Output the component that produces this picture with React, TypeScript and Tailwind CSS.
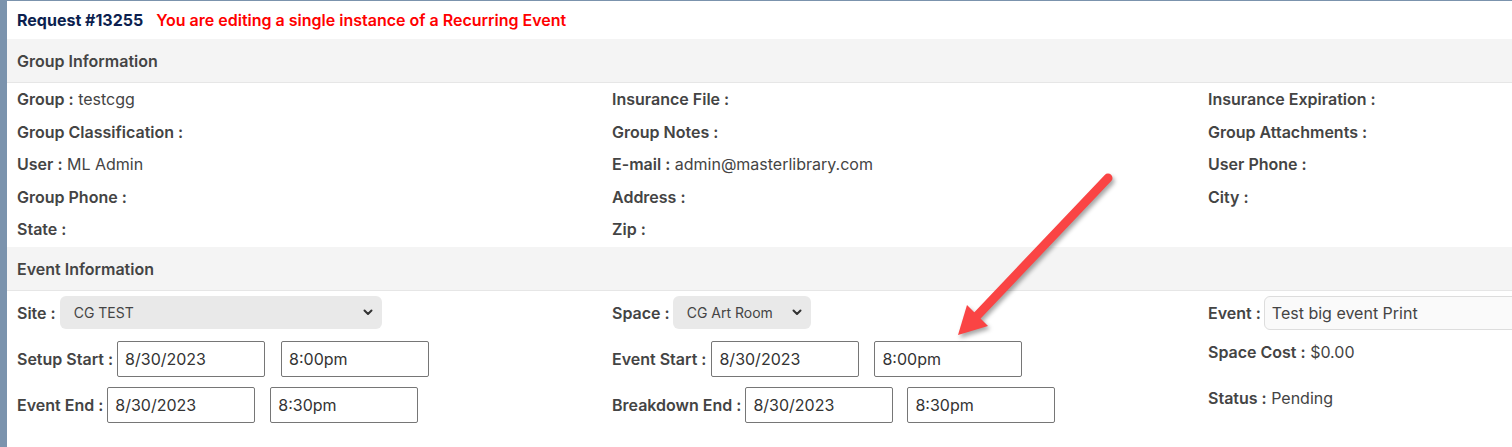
import React from 'react'

const font = { fontFamily: 'Inter, "Noto Sans", sans-serif' }

type Field = { label: string; value?: string }

const groupRows: Field[][] = [
    [{ label: 'Group', value: 'testcgg' }, { label: 'Insurance File' }, { label: 'Insurance Expiration' }],
    [{ label: 'Group Classification' }, { label: 'Group Notes' }, { label: 'Group Attachments' }],
    [{ label: 'User', value: 'ML Admin' }, { label: 'E-mail', value: 'admin@masterlibrary.com' }, { label: 'User Phone' }],
    [{ label: 'Group Phone' }, { label: 'Address' }, { label: 'City' }],
    [{ label: 'State' }, { label: 'Zip' }, { label: '' }],
]

const Label = ({ text }: { text: string }) => (
    <span className="font-semibold text-[#444444] whitespace-nowrap">{text} :</span>
)

const TextBox = ({ value }: { value: string }) => (
    <div className="w-[148px] h-[36px] border border-[#767676] rounded-[2px] bg-white flex items-center px-[7px] text-[16px] text-[#333333] font-normal">
        {value}
    </div>
)

const Select = ({ value, width }: { value: string; width: string }) => (
    <div className={`${width} h-[33px] rounded-[6px] bg-[#e9e9e9] flex items-center justify-between pl-[14px] pr-[9px] text-[14px] text-[#444444] font-normal`}>
        <span>{value}</span>
        <svg width="10" height="7" viewBox="0 0 10 7">
            <path d="M1.5 1.5 L5 5 L8.5 1.5" fill="none" stroke="#333" strokeWidth="2" strokeLinecap="round" strokeLinejoin="round" />
        </svg>
    </div>
)

const SectionHeader = ({ title }: { title: string }) => (
    <div className="h-[44px] bg-[#f4f4f4] border-b border-[#e6e6e6] flex items-center pl-[10px] text-[16px] font-semibold text-[#444444]">
        {title}
    </div>
)

export default function App() {
    return (
        <div className="relative w-[1512px] h-[447px] overflow-hidden bg-white flex" style={font}>
            <div className="w-[7px] shrink-0 bg-[#7b93ad]" />
            <div className="flex-1 border-t border-[#7b93ad] overflow-hidden">
                <div className="w-[1800px]">
                    <div className="h-[38px] flex items-center gap-[13px] pl-[10px] text-[16px]">
                        <span className="text-[#0c1f4f] font-bold">Request #13255</span>
                        <span className="text-[#ff0000] font-semibold">You are editing a single instance of a Recurring Event</span>
                    </div>
                    <SectionHeader title="Group Information" />
                    <div className="pl-[10px] pb-[1.5px] text-[16px]">
                        {groupRows.map((row, i) => (
                            <div key={i} className="grid grid-cols-[595px_596px_1fr] h-[32.5px] items-center">
                                {row.map((f, j) => (
                                    <div key={j} className="whitespace-nowrap">
                                        {f.label && <Label text={f.label} />}
                                        {f.value && <span className="text-[#444444]"> {f.value}</span>}
                                    </div>
                                ))}
                            </div>
                        ))}
                    </div>
                    <SectionHeader title="Event Information" />
                    <div className="pl-[10px] pt-[5px] text-[16px] grid grid-cols-[595px_596px_1fr] grid-rows-[35px_36px_36px] gap-y-[10px]">
                        <div className="flex items-start gap-[4px]">
                            <span className="h-[33px] flex items-center"><Label text="Site" /></span>
                            <Select value="CG TEST" width="w-[322px]" />
                        </div>
                        <div className="flex items-start gap-[3px]">
                            <span className="h-[33px] flex items-center"><Label text="Space" /></span>
                            <Select value="CG Art Room" width="w-[138px]" />
                        </div>
                        <div className="flex items-start gap-[3px]">
                            <span className="h-[34px] flex items-center"><Label text="Event" /></span>
                            <div className="w-[300px] h-[34px] rounded-[6px] border border-[#dddddd] bg-[#fafafa] flex items-center px-[7px] text-[16px] text-[#444444]">
                                Test big event Print
                            </div>
                        </div>

                        <div className="flex items-center">
                            <Label text="Setup Start" />
                            <div className="ml-[4px]"><TextBox value="8/30/2023" /></div>
                            <div className="ml-[16px]"><TextBox value="8:00pm" /></div>
                        </div>
                        <div className="flex items-center">
                            <Label text="Event Start" />
                            <div className="ml-[5px]"><TextBox value="8/30/2023" /></div>
                            <div className="ml-[15px]"><TextBox value="8:00pm" /></div>
                        </div>
                        <div className="flex items-start leading-[22px]">
                            <Label text="Space Cost" />
                            <span className="text-[#444444]">&nbsp;$0.00</span>
                        </div>

                        <div className="flex items-center">
                            <Label text="Event End" />
                            <div className="ml-[4px]"><TextBox value="8/30/2023" /></div>
                            <div className="ml-[15px]"><TextBox value="8:30pm" /></div>
                        </div>
                        <div className="flex items-center">
                            <Label text="Breakdown End" />
                            <div className="ml-[4px]"><TextBox value="8/30/2023" /></div>
                            <div className="ml-[14px]"><TextBox value="8:30pm" /></div>
                        </div>
                        <div className="flex items-start leading-[22px]">
                            <Label text="Status" />
                            <span className="text-[#444444]">&nbsp;Pending</span>
                        </div>
                    </div>
                </div>
            </div>

            <svg
                className="absolute left-0 top-0 pointer-events-none"
                width="1512"
                height="447"
                style={{ filter: 'drop-shadow(2px 3px 2px rgba(0,0,0,0.35))' }}
            >
                <line x1="1108" y1="178" x2="975" y2="318" stroke="#fa4444" strokeWidth="9" strokeLinecap="round" />
                <polygon points="958,335 967,305 988,326" fill="#fa4444" />
            </svg>
        </div>
    )
}
